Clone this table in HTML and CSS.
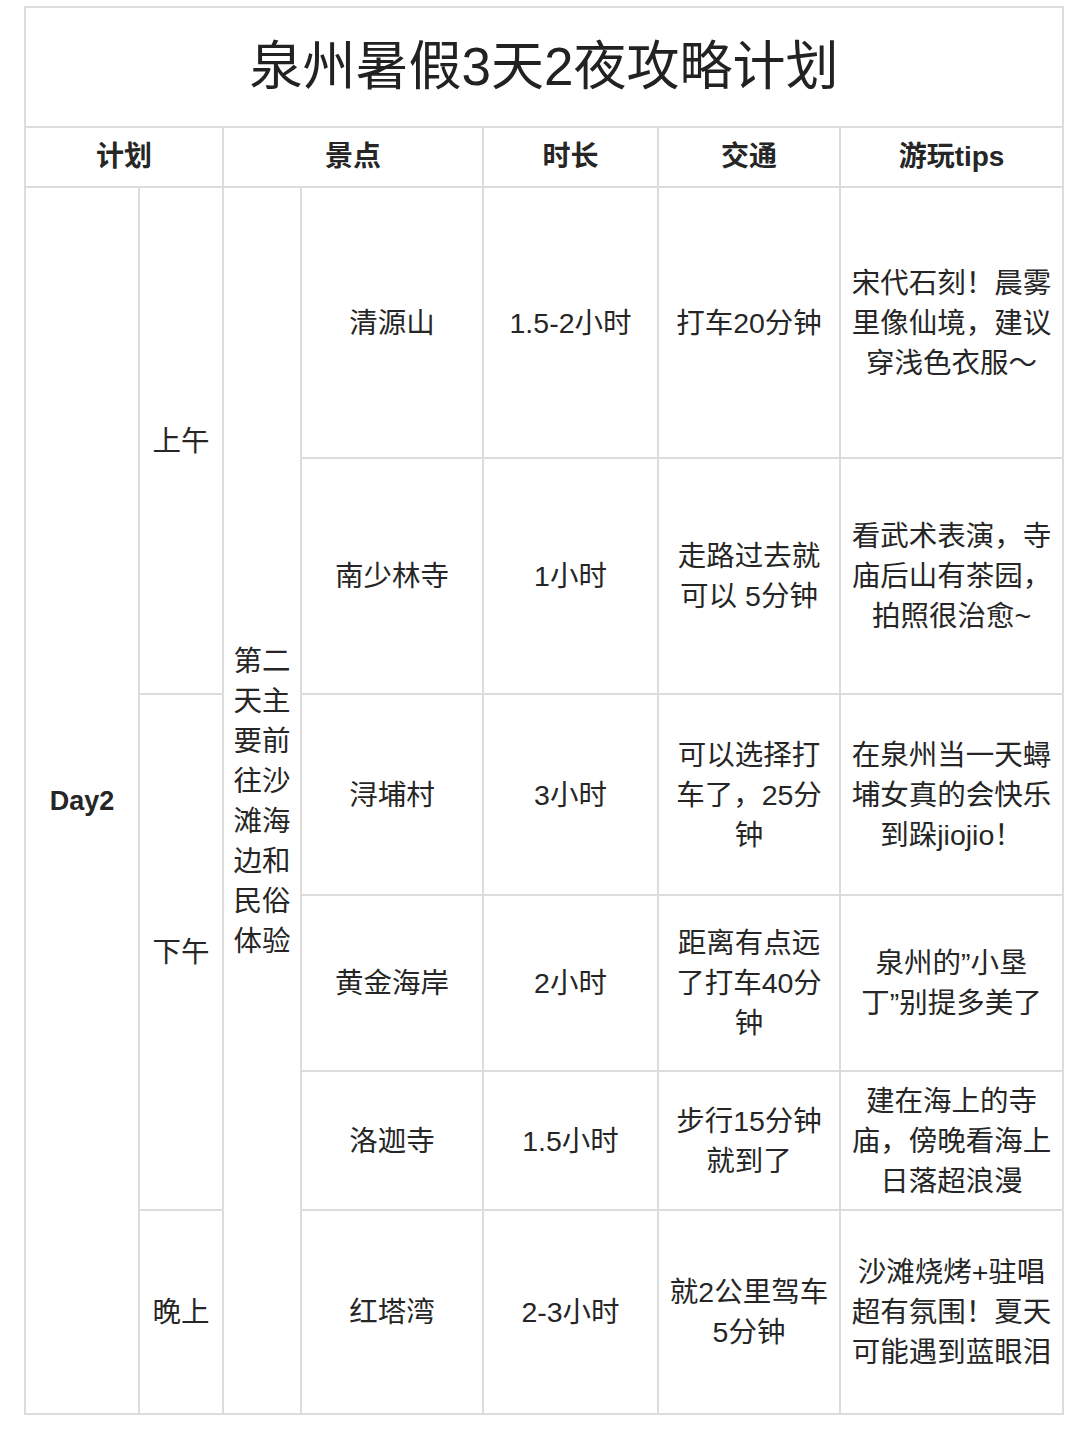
FILE: index.html
```html
<!DOCTYPE html>
<html lang="zh">
<head>
<meta charset="utf-8">
<title>泉州暑假3天2夜攻略计划</title>
<link rel="stylesheet" href="styles.css">
</head>
<body>
<div class="page">
<table class="plan">
  <colgroup>
    <col class="c1"><col class="c2"><col class="c3"><col class="c4"><col class="c5"><col class="c6"><col class="c7">
  </colgroup>
  <tr class="r-title"><td colspan="7" class="title">泉州暑假3天2夜攻略计划</td></tr>
  <tr class="r-head">
    <th colspan="2">计划</th>
    <th colspan="2">景点</th>
    <th>时长</th>
    <th>交通</th>
    <th>游玩tips</th>
  </tr>
  <tr class="r1">
    <td rowspan="6" class="day">Day2</td>
    <td rowspan="2">上午</td>
    <td rowspan="6" class="theme">第二<br>天主<br>要前<br>往沙<br>滩海<br>边和<br>民俗<br>体验</td>
    <td>清源山</td>
    <td>1.5-2小时</td>
    <td>打车20分钟</td>
    <td>宋代石刻！晨雾<br>里像仙境，建议<br>穿浅色衣服～</td>
  </tr>
  <tr class="r2">
    <td>南少林寺</td>
    <td>1小时</td>
    <td>走路过去就<br>可以 5分钟</td>
    <td>看武术表演，寺<br>庙后山有茶园，<br>拍照很治愈~</td>
  </tr>
  <tr class="r3">
    <td rowspan="3">下午</td>
    <td>浔埔村</td>
    <td>3小时</td>
    <td>可以选择打<br>车了，25分<br>钟</td>
    <td>在泉州当一天蟳<br>埔女真的会快乐<br>到跺jiojio！</td>
  </tr>
  <tr class="r4">
    <td>黄金海岸</td>
    <td>2小时</td>
    <td>距离有点远<br>了打车40分<br>钟</td>
    <td>泉州的”小垦<br>丁”别提多美了</td>
  </tr>
  <tr class="r5">
    <td>洛迦寺</td>
    <td>1.5小时</td>
    <td>步行15分钟<br>就到了</td>
    <td>建在海上的寺<br>庙，傍晚看海上<br>日落超浪漫</td>
  </tr>
  <tr class="r6">
    <td>晚上</td>
    <td>红塔湾</td>
    <td>2-3小时</td>
    <td>就2公里驾车<br>5分钟</td>
    <td>沙滩烧烤+驻唱<br>超有氛围！夏天<br>可能遇到蓝眼泪</td>
  </tr>
</table>
</div>
</body>
</html>
```

FILE: styles.css
```css
html, body {
  margin: 0;
  padding: 0;
  background: #ffffff;
}
.page {
  padding: 6px 0 0 24px;
}
.plan {
  border-collapse: collapse;
  table-layout: fixed;
  width: 1038px;
  font-family: "Liberation Sans", "Noto Sans CJK SC", sans-serif;
  color: #262626;
  font-size: 28.5px;
  line-height: 40px;
}
.c1 { width: 114px; }
.c2 { width: 84px; }
.c3 { width: 78px; }
.c4 { width: 182px; }
.c5 { width: 175px; }
.c6 { width: 182px; }
.c7 { width: 223px; }
.plan td, .plan th {
  border: 2px solid #dcdcdc;
  text-align: center;
  vertical-align: middle;
  padding: 0 5px;
  font-weight: normal;
}
.plan th {
  font-weight: bold;
  font-size: 28px;
}
.r-title { height: 120px; }
.r-head { height: 60px; }
.r1 { height: 271px; }
.r2 { height: 236px; }
.r3 { height: 201px; }
.r4 { height: 176px; }
.r5 { height: 139px; }
.r6 { height: 204px; }
.plan td.title {
  font-size: 53px;
  line-height: 60px;
  color: #222;
}
.plan td.day {
  font-weight: bold;
  font-size: 27px;
}
.plan td.theme {
  padding: 0 3px;
}
```
